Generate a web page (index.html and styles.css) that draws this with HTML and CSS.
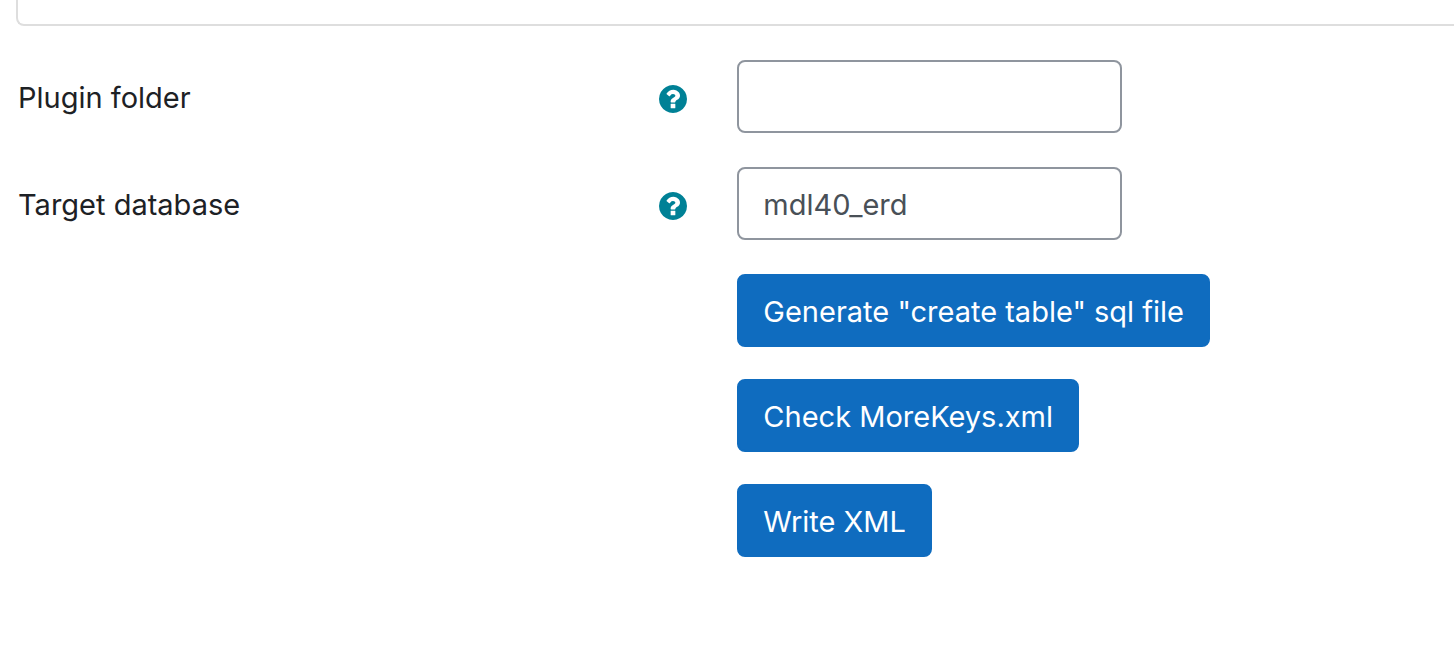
FILE: index.html
```html
<!DOCTYPE html>
<html lang="en">
<head>
<meta charset="utf-8">
<meta name="viewport" content="width=device-width, initial-scale=1">
<title>Plugin settings</title>
<link rel="stylesheet" href="styles.css">
</head>
<body>
<svg class="sprite" aria-hidden="true">
  <symbol id="help" viewBox="0 0 1536 1536"><path d="M896 1248v-192q0-14-9-23t-23-9h-192q-14 0-23 9t-9 23v192q0 14 9 23t23 9h192q14 0 23-9t9-23zm256-672q0-88-55.500-163t-138.500-116-170-41q-243 0-371 213-15 24 8 42l132 100q7 6 19 6 16 0 25-12 53-68 86-92 34-24 86-24 48 0 85.500 26t37.500 59q0 38-20 61t-68 45q-63 28-115.500 86.500t-52.500 125.500v36q0 14 9 23t23 9h192q14 0 23-9t9-23q0-19 21.500-49.500t54.500-49.500q32-18 49-28.500t46-35 44.500-48 28-60.500 12.500-81zm384 192q0 209-103 385.500t-279.500 279.500-385.500 103-385.500-103-279.500-279.500-103-385.500 103-385.500 279.500-279.500 385.500-103 385.500 103 279.500 279.500 103 385.500z"/></symbol>
</svg>
<main class="page">
  <div class="panel"></div>
  <form class="form">
    <div class="row">
      <div class="row-label">
        <label class="label" for="plugin-folder">Plugin folder</label>
        <button class="help" type="button" aria-label="Help with Plugin folder"><svg class="help-icon"><use href="#help"/></svg></button>
      </div>
      <input class="field" id="plugin-folder" type="text">
    </div>
    <div class="row">
      <div class="row-label">
        <label class="label" for="target-database">Target database</label>
        <button class="help" type="button" aria-label="Help with Target database"><svg class="help-icon"><use href="#help"/></svg></button>
      </div>
      <input class="field" id="target-database" type="text" value="mdl40_erd">
    </div>
    <div class="row">
      <div class="actions">
        <button class="button" type="button">Generate "create table" sql file</button>
        <button class="button" type="button">Check MoreKeys.xml</button>
        <button class="button" type="button">Write XML</button>
      </div>
    </div>
  </form>
</main>
</body>
</html>
```
FILE: styles.css
```css
* {
  box-sizing: border-box;
}

body {
  margin: 0;
  background: #fff;
  color: #1d2125;
  font-family: Inter, "Liberation Sans", sans-serif;
  font-size: 29px;
  line-height: 45px;
}

.sprite {
  display: none;
}

.page {
  padding-left: 16px;
}

.panel {
  height: 26px;
  border: 2px solid #dedede;
  border-width: 0 0 2px 2px;
  border-bottom-left-radius: 8px;
}

.form {
  display: flex;
  flex-direction: column;
  gap: 34px;
  padding: 34px 20px 34px 2px;
}

.row {
  display: grid;
  grid-template-columns: 49fr 51fr;
  column-gap: 50px;
  align-items: center;
}

.row-label {
  display: flex;
  align-items: center;
  justify-content: space-between;
}

.label {
  padding-top: 2px;
}

.help {
  display: flex;
  padding: 4px 0 0;
  border: 0;
  background: none;
  color: #008196;
}

.help-icon {
  width: 28px;
  height: 28px;
  fill: currentColor;
}

.field,
.button {
  height: 73px;
  padding: 13px 24px 11px;
  border: 2px solid #8f959e;
  border-radius: 8px;
  font: inherit;
}

.field {
  width: 385px;
  max-width: 100%;
  background: #fff;
  color: #495057;
}

.actions {
  display: flex;
  flex-direction: column;
  align-items: flex-start;
  gap: 32px;
  grid-column: 2;
}

.button {
  border-color: #0f6cbf;
  background: #0f6cbf;
  color: #fff;
}
```
